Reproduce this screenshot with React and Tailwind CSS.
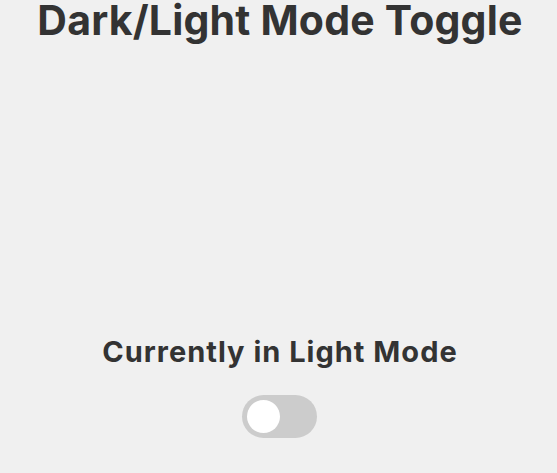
import React, { useState } from "react";

const App = () => {
  const [dark, setDark] = useState(false);

  return (
    <div className="min-h-screen bg-[#f0f0f0] text-[#333333] flex flex-col items-center pl-[3px] font-['Inter',sans-serif]">
      {/* Title */}
      <h1 className="text-[41px] font-bold leading-none tracking-[0.2px] whitespace-nowrap">
        Dark/Light Mode Toggle
      </h1>

      {/* Status + switch */}
      <div className="mt-[296px] flex flex-col items-center">
        <h2 className="text-[29px] font-bold leading-none tracking-[1px] whitespace-nowrap">
          Currently in {dark ? "Dark" : "Light"} Mode
        </h2>
        <button
          type="button"
          onClick={() => setDark(!dark)}
          className="mt-[29px] relative w-[75px] h-[43px] rounded-full bg-[#cccccc] cursor-pointer"
        >
          <span className="absolute left-[5px] top-[5px] w-[33px] h-[33px] rounded-full bg-white"></span>
        </button>
      </div>
    </div>
  );
};

export default App;
